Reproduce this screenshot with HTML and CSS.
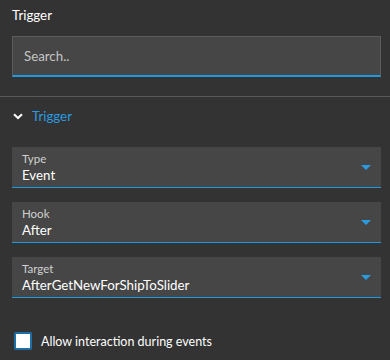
FILE: index.html
```html
<!DOCTYPE html>
<html lang="en">
<head>
  <meta charset="UTF-8" />
  <title>Trigger</title>
  <link rel="stylesheet" href="styles.css">
</head>
<body>
  <div class="panel">
    <div class="top">
      <h3 class="title">Trigger</h3>
      <input type="text" class="search" placeholder="Search..">
    </div>

    <div class="group">
      <div class="group-head">
        <svg class="chev" width="10" height="7" viewBox="0 0 10 7"><path d="M1 1.2 L5 5 L9 1.2" fill="none" stroke="#fff" stroke-width="2"/></svg>
        <span>Trigger</span>
      </div>

      <div class="field">
        <div class="field-text">
          <span class="field-label">Type</span>
          <span class="field-value">Event</span>
        </div>
        <span class="arrow"></span>
      </div>

      <div class="field">
        <div class="field-text">
          <span class="field-label">Hook</span>
          <span class="field-value">After</span>
        </div>
        <span class="arrow"></span>
      </div>

      <div class="field">
        <div class="field-text">
          <span class="field-label">Target</span>
          <span class="field-value">AfterGetNewForShipToSlider</span>
        </div>
        <span class="arrow"></span>
      </div>

      <label class="check">
        <span class="box"></span>
        <span>Allow interaction during events</span>
      </label>
    </div>
  </div>
</body>
</html>
```

FILE: styles.css
```css
body {
  margin: 0;
  background-color: #333333;
  color: #fff;
  font-family: Lato, 'Open Sans', sans-serif;
  font-size: 13.3px;
}

.panel {
  width: 390px;
  height: 360px;
  overflow: hidden;
}

.top {
  padding: 6px 9px 19px 12px;
  border-bottom: 1px solid #595959;
}

.title {
  margin: 0 0 12px;
  font-size: 13.3px;
  font-weight: normal;
  line-height: 18px;
}

.search {
  display: block;
  width: 100%;
  height: 41px;
  box-sizing: border-box;
  margin: 0;
  padding: 0 11px;
  background-color: #464646;
  border: 1px solid #5c5c5c;
  border-bottom: 2px solid #1e9be0;
  color: #fff;
  font-family: inherit;
  font-size: 13.3px;
  outline: none;
}

.search::placeholder {
  color: #c4c4c4;
}

.group {
  padding: 0 9px 0 12px;
}

.group-head {
  display: flex;
  align-items: center;
  height: 38px;
  padding-left: 1px;
  color: #2a9be0;
}

.chev {
  margin-right: 9px;
}

.field {
  display: flex;
  align-items: center;
  height: 40px;
  margin-top: 12px;
  padding: 0 10px;
  background-color: #464646;
  border-bottom: 1px solid #1e9be0;
}

.field + .field {
  margin-top: 14px;
}

.field-text {
  flex: 1;
  display: flex;
  flex-direction: column;
  padding-top: 1px;
}

.field-label {
  font-size: 11.5px;
  line-height: 14px;
  color: #d0d0d0;
}

.field-value {
  line-height: 18px;
}

.arrow {
  width: 0;
  height: 0;
  border-left: 5px solid transparent;
  border-right: 5px solid transparent;
  border-top: 5px solid #2a9be0;
}

.check {
  display: flex;
  align-items: center;
  margin-top: 34px;
  padding-left: 2px;
  font-size: 12.5px;
}

.box {
  width: 14px;
  height: 14px;
  margin-right: 9px;
  background-color: #fff;
  border: 2px solid #1e6fa8;
  border-radius: 2px;
}
```
